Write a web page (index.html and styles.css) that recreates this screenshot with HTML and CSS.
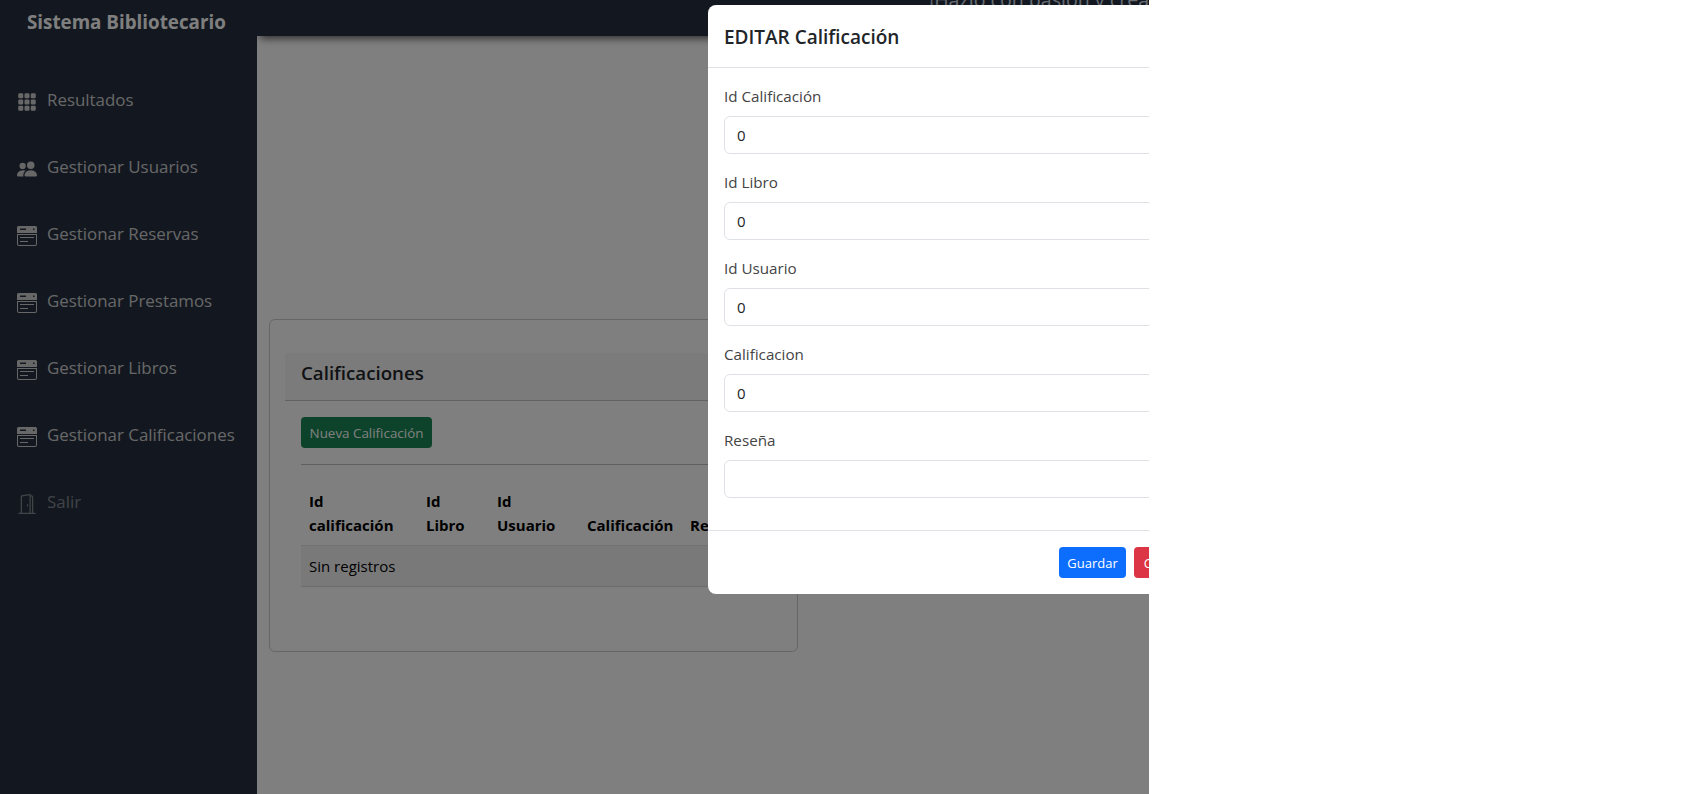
FILE: index.html
```html
<!DOCTYPE html>
<html lang="en">
<head>
    <meta charset="UTF-8">
    <meta name="viewport" content="width=device-width, initial-scale=1.0">
    <title>Sistema Bibliotecario</title>
    <link rel="stylesheet" href="styles.css">
</head>
<body>
    <div class="page">
        <aside class="sidebar">
            <div class="brand">Sistema Bibliotecario</div>
            <nav class="nav">
                <a class="nav-link" href="#">
                    <svg class="nav-icon" viewBox="0 0 16 16"><path d="M1 2a1 1 0 0 1 1-1h2a1 1 0 0 1 1 1v2a1 1 0 0 1-1 1H2a1 1 0 0 1-1-1V2zm5 0a1 1 0 0 1 1-1h2a1 1 0 0 1 1 1v2a1 1 0 0 1-1 1H7a1 1 0 0 1-1-1V2zm5 0a1 1 0 0 1 1-1h2a1 1 0 0 1 1 1v2a1 1 0 0 1-1 1h-2a1 1 0 0 1-1-1V2zM1 7a1 1 0 0 1 1-1h2a1 1 0 0 1 1 1v2a1 1 0 0 1-1 1H2a1 1 0 0 1-1-1V7zm5 0a1 1 0 0 1 1-1h2a1 1 0 0 1 1 1v2a1 1 0 0 1-1 1H7a1 1 0 0 1-1-1V7zm5 0a1 1 0 0 1 1-1h2a1 1 0 0 1 1 1v2a1 1 0 0 1-1 1h-2a1 1 0 0 1-1-1V7zM1 12a1 1 0 0 1 1-1h2a1 1 0 0 1 1 1v2a1 1 0 0 1-1 1H2a1 1 0 0 1-1-1v-2zm5 0a1 1 0 0 1 1-1h2a1 1 0 0 1 1 1v2a1 1 0 0 1-1 1H7a1 1 0 0 1-1-1v-2zm5 0a1 1 0 0 1 1-1h2a1 1 0 0 1 1 1v2a1 1 0 0 1-1 1h-2a1 1 0 0 1-1-1v-2z"/></svg>
                    Resultados
                </a>
                <a class="nav-link" href="#">
                    <svg class="nav-icon" viewBox="0 0 16 16"><path d="M7 14s-1 0-1-1 1-4 5-4 5 3 5 4-1 1-1 1H7zm4-6a3 3 0 1 0 0-6 3 3 0 0 0 0 6z"/><path fill-rule="evenodd" d="M5.216 14A2.238 2.238 0 0 1 5 13c0-1.355.68-2.75 1.936-3.72A6.325 6.325 0 0 0 5 9c-4 0-5 3-5 4s1 1 1 1h4.216z"/><path d="M4.5 8a2.5 2.500 0 1 0 0-5 2.500 2.500 0 0 0 0 5z"/></svg>
                    Gestionar Usuarios
                </a>
                <a class="nav-link" href="#">
                    <svg class="nav-icon" viewBox="0 0 20 20"><use href="#rack"/></svg>
                    Gestionar Reservas
                </a>
                <a class="nav-link" href="#">
                    <svg class="nav-icon" viewBox="0 0 20 20"><use href="#rack"/></svg>
                    Gestionar Prestamos
                </a>
                <a class="nav-link" href="#">
                    <svg class="nav-icon" viewBox="0 0 20 20"><use href="#rack"/></svg>
                    Gestionar Libros
                </a>
                <a class="nav-link" href="#">
                    <svg class="nav-icon" viewBox="0 0 20 20"><use href="#rack"/></svg>
                    Gestionar Calificaciones
                </a>
                <a class="nav-link nav-link-muted" href="#">
                    <svg class="nav-icon nav-icon-door" viewBox="0 0 16 16"><path d="M8.500 10c-.276 0-.5-.448-.5-1s.224-1 .5-1 .5.448.5 1-.224 1-.5 1z"/><path d="M10.828.122A.5.5 0 0 1 11 .5V1h.5A1.5 1.5 0 0 1 13 2.5V15h1.5a.5.5 0 0 1 0 1h-13a.5.5 0 0 1 0-1H3V1.5a.5.5 0 0 1 .43-.495l7-1a.5.5 0 0 1 .398.117zM11.500 2H11v13h1V2.500a.5.5 0 0 0-.5-.5zM4 1.934V15h6V1.077l-6 .857z"/></svg>
                    Salir
                </a>
            </nav>
        </aside>

        <div class="main">
            <header class="topbar">
                <span class="slogan">¡Hazlo con pasión y crea tu futuro!</span>
            </header>

            <section class="card">
                <h5 class="card-header">Calificaciones</h5>
                <div class="card-body">
                    <button class="btn btn-green" type="button">Nueva Calificación</button>
                    <hr class="divider">
                    <table class="table">
                        <thead>
                            <tr>
                                <th class="col-id">Id calificación</th>
                                <th class="col-libro">Id Libro</th>
                                <th class="col-usuario">Id Usuario</th>
                                <th class="col-calif">Calificación</th>
                                <th>Reseña</th>
                            </tr>
                        </thead>
                        <tbody>
                            <tr class="striped">
                                <td colspan="5">Sin registros</td>
                            </tr>
                        </tbody>
                    </table>
                </div>
            </section>
        </div>

        <div class="backdrop"></div>

        <div class="modal">
            <div class="modal-header">EDITAR Calificación</div>
            <form class="modal-body">
                <label class="form-label" for="idCalificacion">Id Calificación</label>
                <input class="form-control" type="number" id="idCalificacion" value="0">

                <label class="form-label" for="idLibro">Id Libro</label>
                <input class="form-control" type="number" id="idLibro" value="0">

                <label class="form-label" for="idUsuario">Id Usuario</label>
                <input class="form-control" type="number" id="idUsuario" value="0">

                <label class="form-label" for="calificacion">Calificacion</label>
                <input class="form-control" type="number" id="calificacion" value="0">

                <label class="form-label" for="resena">Reseña</label>
                <input class="form-control" type="text" id="resena">
            </form>
            <div class="modal-footer">
                <button class="btn btn-blue" type="button">Guardar</button>
                <button class="btn btn-red" type="button">Cancelar</button>
            </div>
        </div>

        <svg class="defs" width="0" height="0">
            <symbol id="rack" viewBox="0 0 20 20">
                <path fill-rule="evenodd" d="M1.500 0h17A1.500 1.500 0 0 1 20 1.500V7H0V1.500A1.500 1.500 0 0 1 1.500 0zM3 2.500v1.500h6V2.500H3zm13 0v1.500h1.500V2.500H16z"/>
                <path fill-rule="evenodd" d="M0 8h20v10a2 2 0 0 1-2 2H2a2 2 0 0 1-2-2V8zm1 1v9a1 1 0 0 0 1 1h16a1 1 0 0 0 1-1V9H1z"/>
                <path d="M3 11h14v1H3zM3 15h8v1H3z"/>
            </symbol>
        </svg>
    </div>
</body>
</html>
```

FILE: styles.css
```css
/* Basic styling */
* {
    box-sizing: border-box;
}

html, body {
    margin: 0;
    height: 100%;
    background: white;
}

body {
    font-family: "Open Sans", "Noto Sans", sans-serif;
    font-size: 15px;
    color: #212529;
}

.page {
    position: relative;
    display: flex;
    width: 1149px;
    height: 794px;
    overflow: hidden;
    background: white;
}

.defs {
    position: absolute;
}

/* Sidebar */
.sidebar {
    position: relative;
    z-index: 1;
    width: 257px;
    flex-shrink: 0;
    background-color: #263040;
}

.brand {
    padding: 9px 0 0 27px;
    height: 66px;
    font-size: 18.800px;
    font-weight: 700;
    line-height: 26px;
    color: white;
    white-space: nowrap;
}

.nav {
    display: flex;
    flex-direction: column;
}

.nav-link {
    display: flex;
    align-items: center;
    gap: 10px;
    height: 67px;
    padding-left: 17px;
    color: #cfcfcf;
    font-size: 16.900px;
    text-decoration: none;
    white-space: nowrap;
}

.nav-link-muted {
    color: #808890;
}

.nav-icon {
    width: 20px;
    height: 20px;
    margin-top: 5px;
    flex-shrink: 0;
    fill: currentColor;
}

.nav-icon-door {
    height: 22px;
}

/* Main column */
.main {
    flex: 1;
    min-width: 0;
}

.topbar {
    height: 36px;
    padding-left: 672px;
    background-color: #263040;
    box-shadow: 0 5px 8px -3px rgba(0, 0, 0, 0.7);
    overflow: hidden;
    white-space: nowrap;
}

.slogan {
    display: block;
    margin-top: -15px;
    font-size: 19.600px;
    line-height: 30px;
    color: #cfd8e3;
}

.card {
    margin: 283px 0 0 12px;
    width: 529px;
    height: 333px;
    padding: 33px 15px 0;
    border: 1px solid rgba(0, 0, 0, 0.2);
    border-radius: 6px;
}

.card-header {
    margin: 0;
    height: 48px;
    padding: 0 16px;
    background: rgba(0, 0, 0, 0.03);
    border-bottom: 1px solid rgba(0, 0, 0, 0.2);
    font-size: 18.700px;
    font-weight: 600;
    line-height: 40px;
}

.card-body {
    padding: 16px;
}

.divider {
    margin: 16px 0 0;
    border: 0;
    border-top: 1px solid rgba(0, 0, 0, 0.25);
}

.btn {
    height: 31px;
    padding: 0 8px;
    border: none;
    border-radius: 4px;
    font-family: inherit;
    font-size: 13px;
    color: white;
    cursor: pointer;
    white-space: nowrap;
}

.btn-green {
    display: block;
    background-color: #198754;
    font-size: 13.400px;
    width: 131px;
}

.btn-blue {
    background-color: #0d6efd;
}

.btn-red {
    background-color: #dc3545;
}

/* Table */
.table {
    width: 100%;
    margin-top: 16px;
    border-collapse: collapse;
    table-layout: fixed;
    color: black;
}

.table th {
    padding: 8px;
    text-align: left;
    vertical-align: bottom;
    font-size: 15px;
    font-weight: 700;
    line-height: 24px;
    border-bottom: 1px solid rgba(0, 0, 0, 0.1);
}

.table td {
    padding: 8px;
    height: 41px;
    border-bottom: 1px solid rgba(0, 0, 0, 0.1);
}

.col-id {
    width: 117px;
}

.col-libro {
    width: 71px;
}

.col-usuario {
    width: 90px;
}

.col-calif {
    width: 103px;
}

.striped {
    background: rgba(0, 0, 0, 0.05);
}

/* Backdrop and modal */
.backdrop {
    position: absolute;
    z-index: 2;
    inset: 0;
    background: rgba(0, 0, 0, 0.5);
}

.modal {
    position: absolute;
    z-index: 3;
    left: 708px;
    top: 5px;
    width: 514px;
    height: 589px;
    display: flex;
    flex-direction: column;
    background: white;
    border-radius: 8px;
    color: #212529;
}

.modal-header {
    height: 63px;
    padding: 0 16px;
    border-bottom: 1px solid #dee2e6;
    font-size: 19px;
    font-weight: 600;
    line-height: 64px;
}

.modal-body {
    flex: 1;
    padding: 16px;
}

.form-label {
    display: block;
    height: 32px;
    font-size: 15.200px;
    line-height: 24px;
    color: #444;
}

.form-control {
    display: block;
    width: 100%;
    height: 38px;
    margin-bottom: 16px;
    padding: 6px 12px;
    border: 1px solid #dee2e6;
    border-radius: 6px;
    font-family: inherit;
    font-size: 15px;
    color: #212529;
    appearance: textfield;
}

.modal-footer {
    display: flex;
    justify-content: flex-end;
    gap: 8px;
    height: 64px;
    padding: 16px;
    border-top: 1px solid #dee2e6;
}

.btn-blue {
    width: 67px;
}

.btn-red {
    width: 72px;
}
```
